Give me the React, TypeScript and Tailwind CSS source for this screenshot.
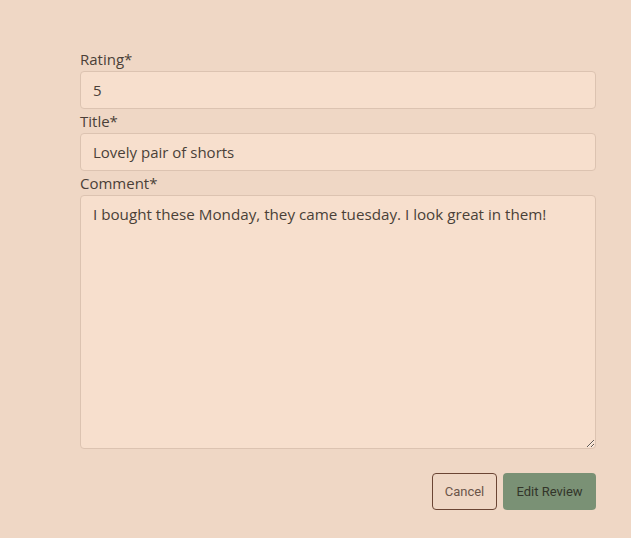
export default function App() {
  return (
    <div className="min-h-[538px] w-full bg-[#efd7c5] pt-[47px] font-['Open_Sans',sans-serif] text-[#4a3f38]">
      <form className="ml-[80px] w-[516px]">
        <label className="block text-[15px] leading-6">Rating*</label>
        <input
          defaultValue="5"
          className="block h-[38px] w-full rounded-[4px] border border-[#dcc3b1] bg-[#f7dfcd] px-3 text-[15px] text-[#4a3f38] outline-none"
        />
        <label className="block text-[15px] leading-6">Title*</label>
        <input
          defaultValue="Lovely pair of shorts"
          className="block h-[38px] w-full rounded-[4px] border border-[#dcc3b1] bg-[#f7dfcd] px-3 text-[15px] text-[#4a3f38] outline-none"
        />
        <label className="block text-[15px] leading-6">Comment*</label>
        <textarea
          defaultValue="I bought these Monday, they came tuesday. I look great in them!"
          className="block h-[254px] w-full rounded-[4px] border border-[#dcc3b1] bg-[#f7dfcd] px-3 py-[6px] text-[15.2px] leading-6 text-[#4a3f38] outline-none"
        />
        <div className="mt-[24px] flex justify-end gap-[6px]">
          <button
            type="button"
            className="h-[37px] w-[65px] rounded-[4px] border border-[#6b4534] text-[13px] text-[#6b5549] font-['Roboto',sans-serif]"
          >
            Cancel
          </button>
          <button
            type="submit"
            className="h-[37px] w-[93px] rounded-[4px] bg-[#7a9175] text-[13px] text-[#33352a] font-['Roboto',sans-serif]"
          >
            Edit Review
          </button>
        </div>
      </form>
    </div>
  )
}
